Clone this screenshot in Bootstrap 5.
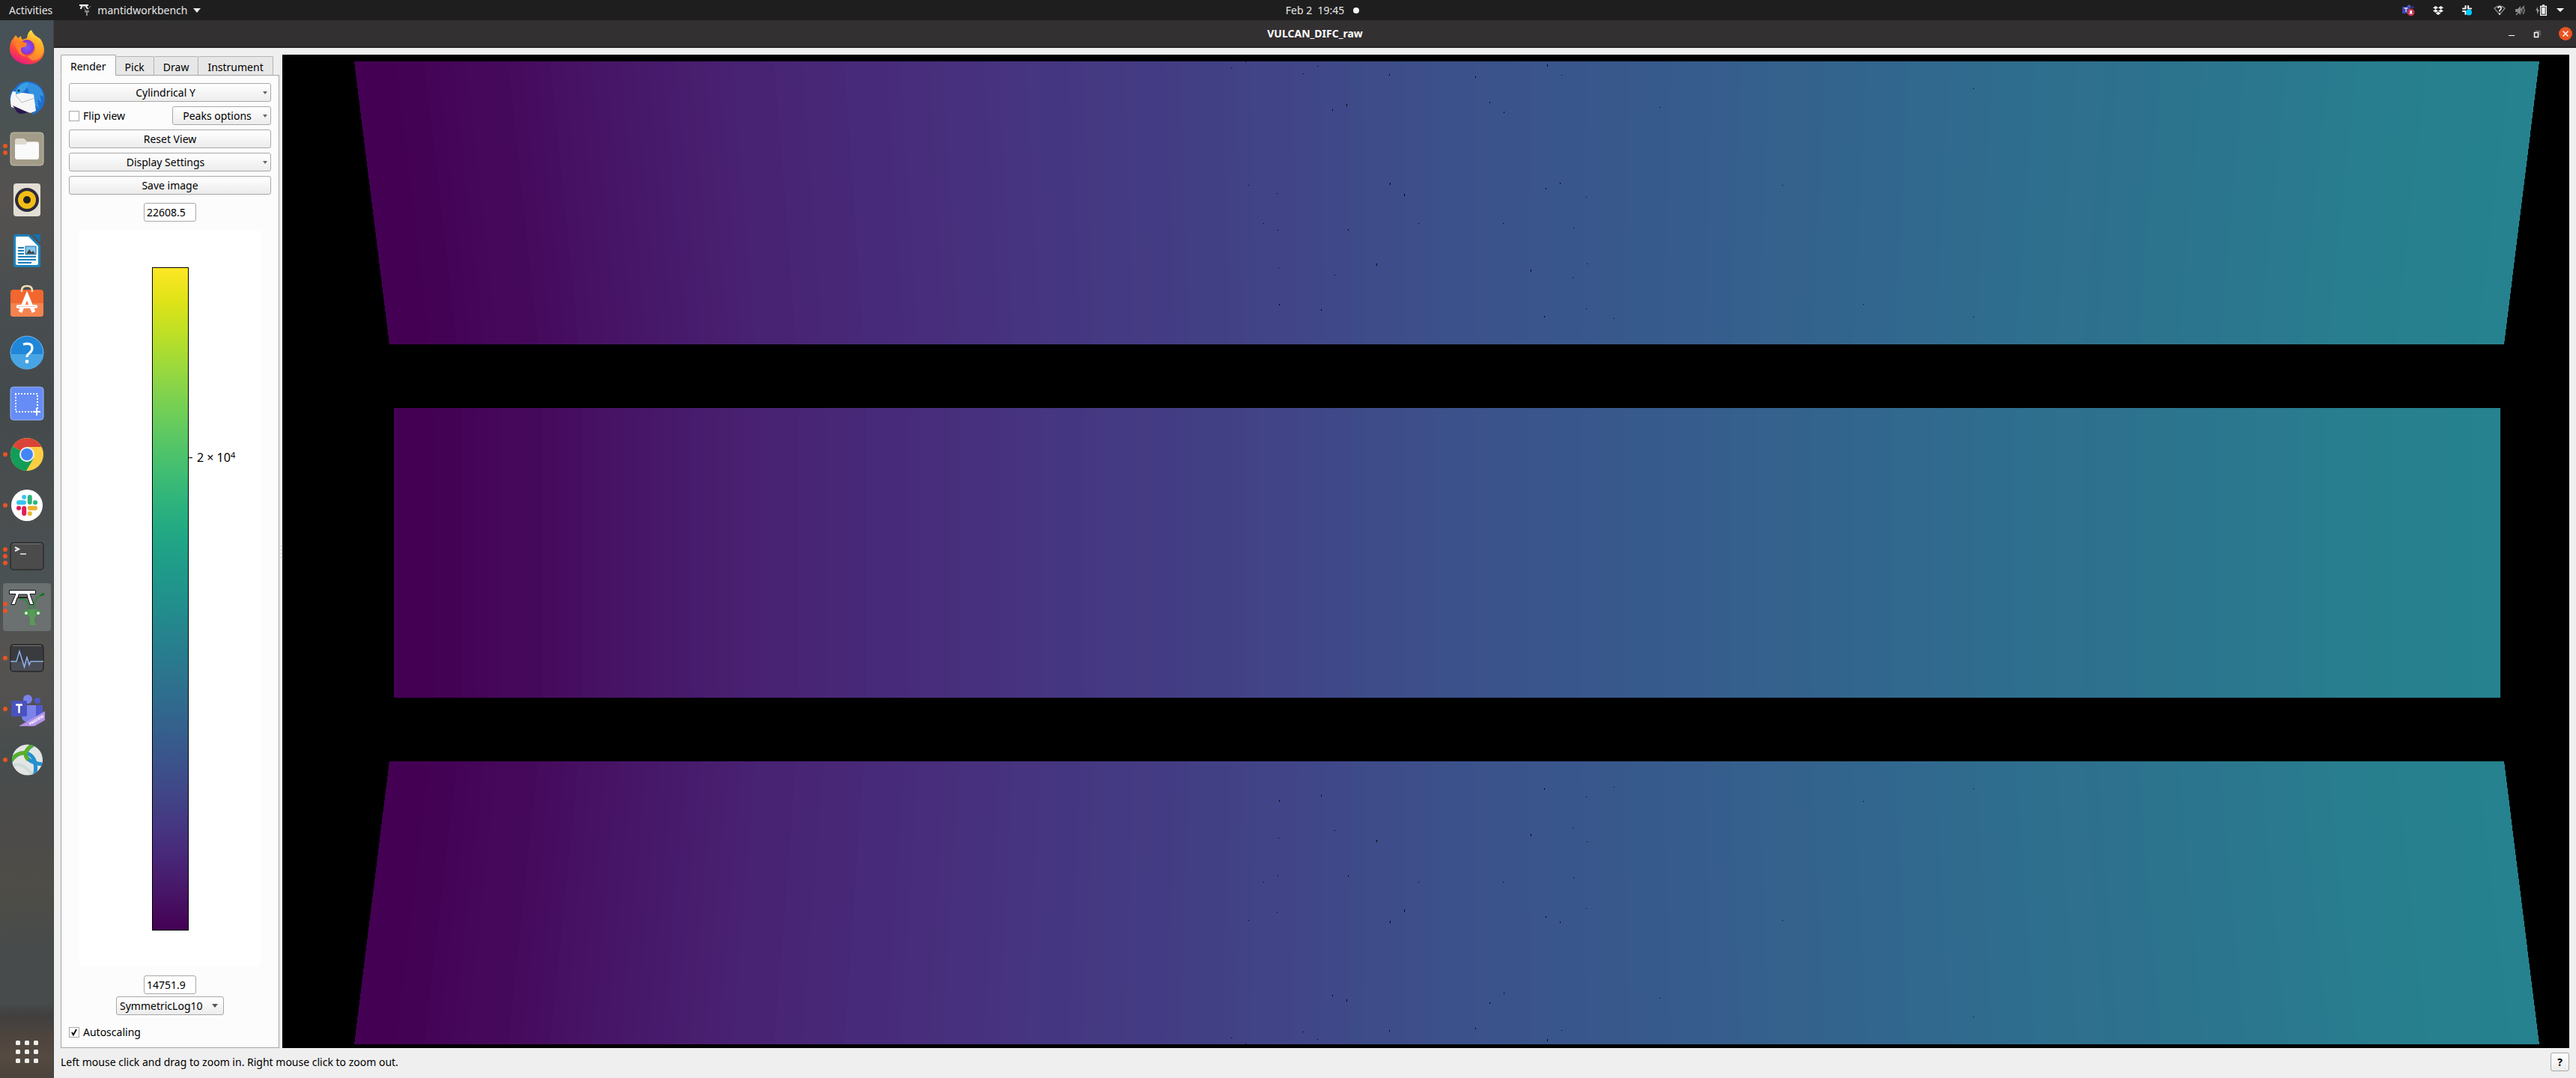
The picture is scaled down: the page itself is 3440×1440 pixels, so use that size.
<!DOCTYPE html>
<html lang="en">
<head>
<meta charset="utf-8">
<meta name="viewport" content="width=device-width, initial-scale=1">
<title>VULCAN_DIFC_raw</title>
<link href="https://cdn.jsdelivr.net/npm/bootstrap@5.3.0/dist/css/bootstrap.min.css" rel="stylesheet">
<style>
body{font-family:"Noto Sans","Open Sans",sans-serif;font-size:14px;line-height:20px;color:#000;background:#efefef;overflow:hidden}
svg{display:block;flex:none}
.topbar{height:27px;background:#1e1e1e;color:#e6e6e6}
.topbar button,.dock button,.wm button{background:none;border:0;padding:0;color:inherit}
.topbar-side{flex:1 1 0}
.tray{gap:24px;padding-right:16px}
.clock{white-space:pre;margin-left:108px}
.clock-dot{width:8px;height:8px;border-radius:50%;background:#f2f2f2;margin-left:12px}
.desk,.workarea{min-height:0}
.win,.view{min-width:0}
.dock{width:72px;padding-top:2px;background:linear-gradient(#465158 0,#4b5252 10%,#555250 17%,#4a4e50 26%,#434a4c 36%,#4b4e4f 47%,#485153 51%,#555350 60%,#545250 63%,#474d4d 69%,#4c4b4a 76%,#4e4d47 82%,#474b4b 88%,#484b4b 93%,#40403f 94%,#4e443e 96%,#544a41 98%,#4b433c 100%);border-right:1px solid #3d4243}
.dock-item{height:68px;width:100%;position:relative}
.dock-item.current::before{content:"";position:absolute;left:4px;right:3px;top:2px;bottom:2px;border-radius:4px;background:#6b7071}
.dock-item svg{position:relative}
.pips{position:absolute;left:4px;top:0;height:100%;gap:3px}
.pips i{width:6px;height:6px;border-radius:50%;background:#e95420}
.titlebar{height:37px;background:#333031;border-bottom:2px solid #262324;color:#fff;font-weight:700}
.wm{width:91px;gap:20px}
.close-btn{width:18px;height:18px}
.workarea{padding:9px 9px 0 9px}
.side{width:292px}
.nav-tabs.qt{border:0;height:28px;align-items:flex-end;position:relative;z-index:1;margin-bottom:-1px}
.qt .nav-link{height:26px;line-height:20px;padding:3px 12px 0;color:#000;background:#e7e7e7;border:1px solid #b4b4b4;border-left-width:0;border-bottom-color:#a5a5a5;border-radius:2px 2px 0 0;margin:0}
.qt .nav-link.active{height:28px;background:#fcfcfc;border-color:#a5a5a5;border-left-width:1px;border-bottom-color:#fcfcfc}
.pane{background:#fcfcfc;border:1px solid #a5a5a5;padding:10px}
.controls{gap:6px;margin-bottom:11px}
.qbtn{height:25px;border:1px solid #a8a8a8;border-radius:3px;background:linear-gradient(#fff,#ececec);color:#000;font-size:14px;line-height:20px;padding:0}
.qbtn:hover{background:#fff;border-color:#888}
.menu-btn{background-image:url("data:image/svg+xml,%3Csvg xmlns='http://www.w3.org/2000/svg' viewBox='0 0 6 4'%3E%3Cpath d='M0 0h6L3 4z' fill='%23666'/%3E%3C/svg%3E"),linear-gradient(#fff,#ececec);background-repeat:no-repeat;background-size:6px 4px,100% 100%;background-position:right 4px top 10px,0 0;padding-right:12px}
.peaks{width:132px}
.form-check-input.tick{width:14px;height:14px;border:1px solid #a8a8a8;border-radius:0;background-color:#fff;margin:0 5px 0 0;box-shadow:none}
.form-check-input.tick:checked{background:#fff url("data:image/svg+xml,%3Csvg xmlns='http://www.w3.org/2000/svg' viewBox='0 0 12 12'%3E%3Cpath d='M3 6l2 3.500L9 2' fill='none' stroke='%23000' stroke-width='1.8'/%3E%3C/svg%3E") center/12px 12px no-repeat}
.num{width:70px;height:25px;border:1px solid #a8a8a8;border-radius:3px;padding:0 3px;font-size:14px;line-height:20px;background:#fff;color:#000}
.scale-select{width:144px;height:25px;margin:3px auto 13px;appearance:none;border:1px solid #a8a8a8;border-radius:3px;padding:0 4px;font-size:14px;line-height:20px;color:#000;background-image:url("data:image/svg+xml,%3Csvg xmlns='http://www.w3.org/2000/svg' viewBox='0 0 8 5'%3E%3Cpath d='M0 0h8L4 5z' fill='%23555'/%3E%3C/svg%3E"),linear-gradient(#fff,#ececec);background-repeat:no-repeat;background-size:8px 5px,100% 100%;background-position:right 7px top 9px,0 0}
.plot{background:#fff;margin:12px 14px;padding:49px 0 48px 97px}
.cbar{width:49px;border:1px solid #000;background:linear-gradient(to top,#440154,#471365,#482475,#463480,#414487,#3b528b,#355f8d,#2f6c8e,#2a788e,#25848e,#21918c,#1e9c89,#22a884,#2fb47c,#44bf70,#5ec962,#7ad151,#9bd93c,#bddf26,#dfe318,#fde725)}
.axis-above{flex:244 1 0}
.axis-below{flex:621 1 0}
.tickline{width:5px;height:1px;background:#000}
.ticktext{font-size:16px;line-height:20px;padding-left:6px}
.ticktext sup{font-size:11px;line-height:1}
.splitter{width:4px}
.splitter i{width:1px;height:1px;background:#999}
.view{background:#000}
.view svg{width:100%;height:100%}
.status{height:40px;padding:0 9px 3px}
.help{width:25px;font-weight:700}
</style>
<script src="https://cdn.jsdelivr.net/npm/bootstrap@5.3.0/dist/js/bootstrap.bundle.min.js"></script>
</head>
<body class="d-flex flex-column vh-100">
<header class="topbar d-flex align-items-center flex-shrink-0">
  <div class="topbar-side d-flex align-items-center">
    <button class="ms-2 ps-1">Activities</button>
    <button class="d-flex align-items-center ps-1 ms-4">
      <svg class="ms-2" width="16" height="17" viewBox="0 0 16 17"><path d="M0 1h12v2H0zM2 3h2L3 7H1zM8 3h2l2 4h-2z" fill="#fff"/><path d="M4 4h5" stroke="#aaa"/><path d="M6 6l3 3M15 3l-4 5" stroke="#888"/><path d="M7 9h6v2l-2 1v4H9v-4l-2-1z" fill="#888"/></svg>
      <span class="ps-1 ms-1">mantidworkbench</span>
      <svg class="ms-2" width="10" height="6" viewBox="0 0 10 6"><path d="M0 0h10L5 6z" fill="#eee"/></svg>
    </button>
  </div>
  <div class="d-flex align-items-center"><span class="clock">Feb 2  19:45</span><span class="clock-dot"></span></div>
  <div class="topbar-side d-flex align-items-center justify-content-end tray">
    <svg width="17" height="16" viewBox="0 0 17 16"><circle cx="9" cy="3" r="2.500" fill="#5059c9"/><circle cx="14" cy="3.500" r="1.500" fill="#33379a"/><rect y="3" width="10" height="9" fill="#3d43b5"/><path d="M2.500 5h5M5 5v5" stroke="#ddd" stroke-width="1.300"/><circle cx="11.500" cy="10.500" r="5" fill="#c4314b"/><path d="M9 12.500l1-1V9q1.500-2.500 3 0v2.500l1 1z" fill="#fff"/></svg>
    <svg width="14" height="14" viewBox="0 0 14 14"><path d="M3.500 1L7 3.200 3.500 5.400 0 3.200zM10.500 1L14 3.200l-3.500 2.200L7 3.200zM3.500 5.400L7 7.600 3.500 9.800 0 7.600zM10.500 5.400L14 7.600l-3.500 2.200L7 7.600zM3.500 10.700L7 8.500l3.500 2.200L7 13z" fill="#f2f2f2"/></svg>
    <svg width="15" height="15" viewBox="0 0 15 15" stroke="#eee" stroke-width="2.200" stroke-linecap="round"><path d="M5.500 2v3.500M9 2v3.500M2 5.500h3.500M9 5.500h4M2 9h3.500M5.500 9v4"/><circle cx="10" cy="10.500" r="4" fill="#00c8ff" stroke="none"/></svg>
    <button class="d-flex align-items-center gap-2 ms-1" aria-label="System">
      <svg class="me-1" width="16" height="14" viewBox="0 0 16 14"><path d="M1 4q7-6 14 0L8 12.500z" fill="none" stroke="#888" stroke-width="1.300"/><path d="M6 4q0-2 2-2t2 2q0 1.500-2 3v1.500M8 10.500v2" fill="none" stroke="#fff" stroke-width="1.600"/></svg>
      <svg width="16" height="14" viewBox="0 0 16 14"><path d="M1 5h3l4-4v12L4 9H1z" fill="#8a8a8a"/><path d="M9 4q2 3 0 6M11 2q4 5 0 10M2 13L13 1" stroke="#8a8a8a" stroke-width="1.300" fill="none"/></svg>
      <svg class="ms-1" width="16" height="15" viewBox="0 0 16 15"><path d="M3 3L0 8h2v5l3-6H3z" fill="#999"/><path d="M6.700 2.500h7.600v11.800H6.700zM9 1h3" fill="none" stroke="#fff" stroke-width="1.300"/><path d="M8.300 4h4.400v8.800H8.300z" fill="#eee"/></svg>
      <svg class="ms-1" width="10" height="5" viewBox="0 0 10 5"><path d="M0 0h10L5 5z" fill="#fff"/></svg>
    </button>
  </div>
</header>
<div class="desk d-flex flex-fill">
  <nav class="dock d-flex flex-column flex-shrink-0" aria-label="Dock">
    <button class="dock-item d-flex align-items-center justify-content-center" aria-label="Firefox">
      <svg width="48" height="48" viewBox="0 0 48 48"><defs><linearGradient id="ff" x1=".8" y1="0" x2=".3" y2="1"><stop offset="0" stop-color="#fff44f"/><stop offset=".4" stop-color="#ff9a1f"/><stop offset=".7" stop-color="#ff4a3a"/><stop offset="1" stop-color="#e31587"/></linearGradient><radialGradient id="fg"><stop offset="0" stop-color="#7a5cff"/><stop offset="1" stop-color="#8b2fc9"/></radialGradient></defs><path d="M6 12l3-4 3 4 4-3q0 3 2 5l6-2q1-9 6-11 2 6 9 10l3 2q5 8 5 15c0 12-10 19-22 19S1 38 1 27q0-10 5-15z" fill="url(#ff)"/><circle cx="24" cy="24" r="10" fill="url(#fg)"/><path d="M8 18q8-4 16 1l-1 4-7 2q-1 9 8 11-12 2-16-18z" fill="#ff7e2a"/><path d="M24 36q11-1 12-11 1-8-4-12 12 1 14 14-2 14-15 15z" fill="#ffb52b" opacity=".55"/></svg></button>
    <button class="dock-item d-flex align-items-center justify-content-center" aria-label="Thunderbird">
      <svg width="48" height="48" viewBox="0 0 48 48"><path d="M10 8q8-8 19-6Q46 6 48 24q0 16-18 23l3-6L6 36Q-2 26 3 16z" fill="#1f6fd0"/><path d="M22 3Q44 4 46 22l-5-2 3 10-6-4 2 12-8-7z" fill="#3491e0"/><path d="M5 15l28 4 3 22-7 3L3 36q-3-12 2-21z" fill="#f6f6f6"/><path d="M9 20l8 10 17-6" stroke="#bbb" fill="none"/><path d="M5 34l20 9q-10 4-14 0z" fill="#2b1550"/><path d="M9 15Q14 3 26 3q-2 14-17 16z" fill="#3aa0e4"/><circle cx="13" cy="14" r="1.500" fill="#123"/></svg></button>
    <button class="dock-item d-flex align-items-center justify-content-center" aria-label="Files">
      <span class="pips d-flex flex-column justify-content-center"><i></i><i></i></span>
      <svg width="48" height="48" viewBox="0 0 48 48"><rect x="2" y="2" width="44" height="44" rx="4" fill="#a39c89" stroke="#c6c0b2"/><path d="M8 13q0-3 3-3h9l4 4h13q3 0 3 3v10H8z" fill="#ddd9cf"/><path d="M8 18h14l3-3h12q3 0 3 3v17q0 3-3 3H11q-3 0-3-3z" fill="#fbfafa"/></svg></button>
    <button class="dock-item d-flex align-items-center justify-content-center" aria-label="Rhythmbox">
      <svg width="48" height="48" viewBox="0 0 48 48"><rect x="6" y="2" width="36" height="44" rx="4" fill="#e2ded4"/><circle cx="24" cy="24" r="16" fill="#2c2b38"/><circle cx="24" cy="24" r="12" fill="#f2bd17"/><circle cx="24" cy="24" r="5" fill="#222"/></svg></button>
    <button class="dock-item d-flex align-items-center justify-content-center" aria-label="LibreOffice Writer">
      <svg width="48" height="48" viewBox="0 0 48 48"><path d="M6 5q0-3 3-3h18l15 15v26q0 3-3 3H9q-3 0-3-3z" fill="#1c81b9"/><path d="M31 2h11v11z" fill="#1570a8"/><path d="M9 7q0-2 2-2h15l13 13v23q0 2-2 2H11q-2 0-2-2z" fill="#fff"/><path d="M12 20h8M12 24h8M12 28h8M12 32h24M12 36h24M12 40h18" stroke="#1b7cb8" stroke-width="2"/><path d="M22 18h14v11H22z" fill="#86c7ea" stroke="#1b6fa8"/><path d="M23 28l4-6 3 4 2-2 3 4z" fill="#444"/></svg></button>
    <button class="dock-item d-flex align-items-center justify-content-center" aria-label="Ubuntu Software">
      <svg width="48" height="48" viewBox="0 0 48 48"><rect x="2" y="8" width="44" height="36" rx="4" fill="#f1672f"/><path d="M2 26h44v14q0 4-4 4H6q-4 0-4-4z" fill="#f58350"/><path d="M17 11V9q0-6 7-6t7 6v2" fill="none" stroke="#f5dfb5" stroke-width="2.500"/><path d="M15 38l9-22 9 22" fill="none" stroke="#fff" stroke-width="5"/><path d="M12 30.500h24" stroke="#fff" stroke-width="4.500" stroke-linecap="round"/><path d="M12 30.500h24" stroke="#f7c9b5" stroke-width="1"/></svg></button>
    <button class="dock-item d-flex align-items-center justify-content-center" aria-label="Help">
      <svg width="48" height="48" viewBox="0 0 48 48"><circle cx="24" cy="24" r="22" fill="#1f86d8" stroke="#7bbcf0"/><path d="M2 26h44a22 20 0 0 1-44 0z" fill="#48a5e4"/><path d="M19 13q12-3 12 5 0 4-4 7-3 2-3 5" fill="none" stroke="#fff" stroke-width="3.200"/><circle cx="24" cy="36" r="2.400" fill="#fff"/></svg></button>
    <button class="dock-item d-flex align-items-center justify-content-center" aria-label="Screenshot">
      <svg width="48" height="48" viewBox="0 0 48 48"><rect x="2" y="2" width="44" height="44" rx="4" fill="#668df5" stroke="#9db6fb"/><path d="M8 11h30v22M9 11v24h24" fill="none" stroke="#fff" stroke-width="2" stroke-dasharray="2 2"/><path d="M37 30v10M32 35h10" stroke="#fff" stroke-width="2"/></svg></button>
    <button class="dock-item d-flex align-items-center justify-content-center" aria-label="Chrome">
      <span class="pips d-flex flex-column justify-content-center"><i></i></span>
      <svg width="48" height="48" viewBox="0 0 48 48"><circle cx="24" cy="24" r="22" fill="#fece42"/><path d="M24 24L5 13a22 22 0 0 0 18 33l10-17z" fill="#129d58"/><path d="M24 24L5 13a22 22 0 0 1 38.500 1H24z" fill="#da4437"/><circle cx="24" cy="24" r="10" fill="#f1f1f1"/><circle cx="24" cy="24" r="8" fill="#4285f4"/></svg></button>
    <button class="dock-item d-flex align-items-center justify-content-center" aria-label="Slack">
      <span class="pips d-flex flex-column justify-content-center"><i></i></span>
      <svg width="48" height="48" viewBox="0 0 48 48"><circle cx="24" cy="24" r="21" fill="#fff"/><g stroke-width="6" stroke-linecap="round"><path d="M13 20.200h7" stroke="#36c5f0"/><path d="M20.200 13v.1" stroke="#36c5f0"/><path d="M27.800 13v7M35 20.200h.1" stroke="#2eb67d"/><path d="M27.800 27.800h7.200M27.800 35v.1" stroke="#ecb22e"/><path d="M20.200 28v7M13 27.800h.1" stroke="#e01e5a"/></g></svg></button>
    <button class="dock-item d-flex align-items-center justify-content-center" aria-label="Terminal">
      <span class="pips d-flex flex-column justify-content-center"><i></i><i></i><i></i></span>
      <svg width="48" height="48" viewBox="0 0 48 48"><rect x="2" y="6" width="44" height="36" rx="4" fill="#4b4b4b" stroke="#2d2d2d" stroke-width="1.500"/><path d="M5 7.500h38" stroke="#777"/><path d="M8 12l5 2.500-5 2.500" fill="none" stroke="#eee" stroke-width="2"/><path d="M15 21h8" stroke="#eee" stroke-width="1.500"/></svg></button>
    <button class="dock-item current d-flex align-items-center justify-content-center" aria-label="Mantid Workbench">
      <span class="pips d-flex flex-column justify-content-center"><i></i><i></i></span>
      <svg width="48" height="48" viewBox="0 0 48 48"><path d="M.5 1.500h35v5H28l5 14h-5l-3-9H11L8 20.500H3l6-14H.5z" fill="#fff" stroke="#111"/><path d="M13 7h11l1 4H12z" fill="#6b7071" stroke="#111"/><path d="M14 13q12-1 14 15M46 6q-12 4-13 20" fill="none" stroke="#2f8a3c" stroke-width="2"/><path d="M41 9l6-4-1 3z" fill="#176b24" stroke="#176b24"/><path d="M25 27h12q2 7-3 11v5l2 5h-8V38q-5-4-3-11z" fill="#569c55"/><circle cx="23" cy="31" r="4" fill="#4a9150"/><circle cx="38" cy="31" r="4" fill="#4a9150"/><circle cx="23" cy="32" r="2" fill="#dfeedd"/><circle cx="39" cy="32" r="2" fill="#dfeedd"/></svg></button>
    <button class="dock-item d-flex align-items-center justify-content-center" aria-label="System Monitor">
      <span class="pips d-flex flex-column justify-content-center"><i></i></span>
      <svg width="48" height="48" viewBox="0 0 48 48"><rect x="2" y="6" width="44" height="36" rx="4" fill="#3a3b3e" stroke="#2a2a2a" stroke-width="1.500"/><path d="M3 29h42v9q0 3-3 3H6q-3 0-3-3z" fill="#4a4d53"/><path d="M5 7.500h38" stroke="#777"/><path d="M2 28.500h8L14 15l6.500 21L24 23l3 10 2-4.500h17" fill="none" stroke="#8fb0ec" stroke-width="1.500"/></svg></button>
    <button class="dock-item d-flex align-items-center justify-content-center" aria-label="Microsoft Teams">
      <span class="pips d-flex flex-column justify-content-center"><i></i></span>
      <svg width="48" height="48" viewBox="0 0 48 48"><circle cx="25" cy="11" r="6" fill="#7b83eb"/><circle cx="38" cy="13" r="4" fill="#5059c9"/><path d="M36 19h9v14q-2 6-9 5z" fill="#5059c9"/><path d="M17 19h19v14q-1 9-10 9-10-1-9-10z" fill="#7b83eb"/><rect x="3" y="13" width="21" height="21" rx="1.500" fill="#4a52bd"/><path d="M9 18.500h9M13.500 18.500v11" stroke="#fff" stroke-width="2.500"/><path d="M13 47L48 27v12L34 47z" fill="#b292e8"/><text x="0" y="0" transform="translate(28 46) rotate(-31)" font-family="Noto Sans,sans-serif" font-size="5" font-weight="700" fill="#fff">PREVIEW</text></svg></button>
    <button class="dock-item d-flex align-items-center justify-content-center" aria-label="AnyConnect">
      <span class="pips d-flex flex-column justify-content-center"><i></i></span>
      <svg width="48" height="48" viewBox="0 0 48 48"><clipPath id="gl"><circle cx="24.500" cy="24" r="20.500"/></clipPath><circle cx="24.500" cy="24" r="20.500" fill="#e3e5e4"/><g clip-path="url(#gl)" fill="none"><path d="M4 32q12-5 22 6t20 1" stroke="#cddcd9" stroke-width="4"/><path d="M36 2Q24 8 22 16q2 12 24 14" stroke="#2490cf" stroke-width="5"/><path d="M2 27q8-14 22-12 16 6 10 32" stroke="#2490cf" stroke-width="5"/><path d="M2 27q8-14 20-12Q24 7 36 2M22 15q0 6 4 9" stroke="#5aae28" stroke-width="5"/></g></svg></button>
    <button class="mt-auto mb-3 mx-auto pb-1" aria-label="Show Applications">
      <svg width="30" height="30" viewBox="0 0 30 30" fill="#f0eeec"><g id="r"><rect width="6" height="6" rx="1.500"/><rect x="12" width="6" height="6" rx="1.500"/><rect x="24" width="6" height="6" rx="1.500"/></g><use href="#r" y="12"/><use href="#r" y="24"/></svg></button>
  </nav>
  <main class="win d-flex flex-column flex-fill">
    <div class="titlebar d-flex align-items-center flex-shrink-0">
      <div class="wm"></div>
      <div class="flex-fill text-center">VULCAN_DIFC_raw</div>
      <div class="wm d-flex align-items-center">
        <button aria-label="Minimize"><svg width="14" height="14" viewBox="0 0 14 14"><path d="M1 9.500h8" stroke="#fff"/></svg></button>
        <button aria-label="Restore"><svg width="14" height="14" viewBox="0 0 14 14"><path d="M1.500 5.500h5v6h-5z" fill="none" stroke="#fff" stroke-width="1.500"/><path d="M3 3.500h6v6" fill="none" stroke="#888"/></svg></button>
        <button class="close-btn" aria-label="Close"><svg width="18" height="18" viewBox="0 0 18 18"><circle cx="9" cy="9" r="9" fill="#e95420"/><path d="M5.500 5.500l7 7M12.500 5.500l-7 7" stroke="#fff" stroke-width="1.500"/></svg></button>
      </div>
    </div>
    <div class="workarea d-flex flex-fill">
      <section class="side d-flex flex-column flex-shrink-0">
        <ul class="nav nav-tabs qt" role="tablist">
          <li class="nav-item"><button class="nav-link active" role="tab">Render</button></li>
          <li class="nav-item"><button class="nav-link" role="tab">Pick</button></li>
          <li class="nav-item"><button class="nav-link" role="tab">Draw</button></li>
          <li class="nav-item"><button class="nav-link" role="tab">Instrument</button></li>
        </ul>
        <div class="pane d-flex flex-column flex-fill">
          <div class="controls d-grid">
            <button class="qbtn menu-btn">Cylindrical Y</button>
            <div class="d-flex align-items-center justify-content-between">
              <div class="d-flex align-items-center"><input class="form-check-input tick" type="checkbox" id="flip"><label for="flip">Flip view</label></div>
              <button class="qbtn menu-btn peaks">Peaks options</button>
            </div>
            <button class="qbtn">Reset View</button>
            <button class="qbtn menu-btn">Display Settings</button>
            <button class="qbtn">Save image</button>
          </div>
          <input class="num mx-auto" type="text" value="22608.5" aria-label="Maximum value">
          <div class="plot d-flex flex-fill">
            <div class="cbar"></div>
            <div class="d-flex flex-column">
              <div class="axis-above"></div>
              <div class="d-flex align-items-center"><span class="tickline"></span><span class="ticktext">2 × 10<sup>4</sup></span></div>
              <div class="axis-below"></div>
            </div>
          </div>
          <input class="num mx-auto" type="text" value="14751.9" aria-label="Minimum value">
          <select class="scale-select" aria-label="Colour scale"><option>SymmetricLog10</option><option>Linear</option></select>
          <div class="d-flex align-items-center"><input class="form-check-input tick" type="checkbox" id="auto" checked><label for="auto">Autoscaling</label></div>
        </div>
      </section>
      <div class="splitter d-flex flex-column align-items-center justify-content-center"><i></i><i class="mt-1"></i><i class="mt-1"></i><i class="mt-1"></i></div>
      <div class="view flex-fill"><svg id="banks" viewBox="0 0 3054 1327" preserveAspectRatio="none" shape-rendering="crispEdges" role="img" aria-label="Detector banks"></svg></div>
    </div>
    <footer class="status d-flex align-items-center justify-content-between flex-shrink-0">
      <span>Left mouse click and drag to zoom in. Right mouse click to zoom out.</span>
      <button class="qbtn help">?</button>
    </footer>
  </main>
</div>
<script>
// viridis control colours, one every 0.05
const viridis = ['440154','471365','482475','463480','414487','3b528b','355f8d','2f6c8e','2a788e','25848e','21918c']
  .map(h => [0, 2, 4].map(i => parseInt(h.substr(i, 2), 16)));
function colour(t) {
  const p = Math.round(t * 255) / 255 / 0.05, i = Math.floor(p), f = p - i;
  return 'rgb(' + viridis[i].map((c, k) => Math.round(c + (viridis[i + 1][k] - c) * f)) + ')';
}
// calibration value along the bank, as pairs of position and value
const curve = [[0, 0], [.018, 0], [.069, .025], [.102, .048], [.148, .076], [.19, .1], [.396, .19], [.506, .247], [.581, .276], [.72, .335], [.9, .408], [.925, .422], [1, .446]];
function value(u) {
  let k = 1;
  while (curve[k][0] < u) k++;
  const [a, b] = [curve[k - 1], curve[k]];
  return a[1] + (b[1] - a[1]) * (u - a[0]) / (b[0] - a[0]);
}
// each bank: top left, top right, bottom left, bottom right, top, bottom
const banks = [[96, 3014, 143, 2967, 9, 387], [149, 2962, 149, 2962, 472, 859], [143, 2967, 96, 3014, 944, 1322]];
const columns = 156;
let out = '';
for (const [tl, tr, bl, br, y0, y1] of banks) {
  for (let i = 0; i < columns; i++) {
    const at = (l, r, n) => (l + (r - l) * n / columns).toFixed(1);
    out += `<path fill="${colour(value((i + .5) / columns))}" d="M${at(tl, tr, i)} ${y0}H${tr}L${br} ${y1}H${at(bl, br, i)}z"/>`;
  }
}
// masked pixels of the upper bank: x, y, height; the lower bank mirrors them
const masked = [[1267,17,1],[1286,9,1],[1363,25,1],[1382,15,1],[1402,73,2],[1421,66,3],[1478,26,2],[1593,29,2],[1612,63,2],[1631,76,2],[1689,13,3],[1708,27,1],[1290,174,1],[1328,185,1],[1310,225,1],[1329,234,1],[1330,284,1],[1423,233,2],[1479,171,3],[1498,186,3],[1517,225,1],[1461,279,3],[1405,294,1],[1331,333,2],[1387,340,2],[1687,178,2],[1706,171,2],[1630,225,1],[1724,231,1],[1742,279,1],[1667,287,3],[1723,297,1],[1741,339,1],[1685,349,2],[1778,352,1],[1741,190,1],[1839,70,1],[2003,174,1],[2258,45,1],[2111,333,1],[2258,350,1]];
for (const [x, y, h] of masked) {
  out += `<rect x="${x}" y="${y}" width="1" height="${h}"/><rect x="${x}" y="${1331 - y - h}" width="1" height="${h}"/>`;
}
document.getElementById('banks').innerHTML = out;
</script>
</body>
</html>
